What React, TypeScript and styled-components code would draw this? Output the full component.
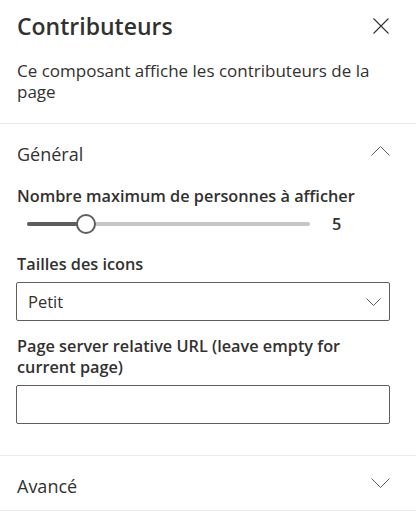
import styled, { createGlobalStyle } from 'styled-components';

const GlobalStyle = createGlobalStyle`
  body {
    margin: 0;
    background: #ffffff;
    font-family: "Open Sans", "Noto Sans", sans-serif;
    color: #323130;
  }
`

const Pane = styled.div`
  width: 416px;
  background: #ffffff;
`

const Header = styled.header`
  display: flex;
  justify-content: space-between;
  align-items: center;
  padding: 10px 27px 0 17px;
  height: 32px;
`

const Title = styled.h1`
  margin: 0;
  font-size: 23px;
  line-height: 32px;
  font-weight: 600;
  color: #323130;
`

const IconButton = styled.button`
  display: flex;
  align-items: center;
  justify-content: center;
  width: 16px;
  height: 16px;
  padding: 0;
  border: none;
  background: transparent;
  cursor: pointer;
`

const Description = styled.p`
  margin: 18px 26px 0 17px;
  padding-bottom: 21px;
  font-size: 17px;
  line-height: 21px;
`

const Group = styled.section`
  border-top: 1px solid #edebe9;
  &:last-child {
    border-bottom: 1px solid #edebe9;
  }
`

const GroupHeader = styled.div`
  display: flex;
  justify-content: space-between;
  align-items: center;
  box-sizing: border-box;
  height: 54px;
  padding: 6px 26px 0 17px;
  font-size: 18px;
  line-height: 24px;
  color: #323130;
  svg {
    margin-bottom: 6px;
  }
`

const GroupBody = styled.div`
  display: flex;
  flex-direction: column;
  gap: 15px;
  padding: 8px 26px 31px 16px;
`

const Field = styled.div`
  display: flex;
  flex-direction: column;
`

const Label = styled.label`
  display: block;
  margin-bottom: 7px;
  padding-left: 1px;
  font-size: 16.3px;
  font-weight: 600;
  line-height: 21px;
`

const SliderRow = styled.div`
  display: flex;
  align-items: center;
  height: 20px;
  margin-bottom: 5px;
  padding-left: 11px;
`

const Track = styled.div`
  position: relative;
  width: 283px;
  height: 4px;
  border-radius: 2px;
  background: #c8c6c4;
`

const TrackFill = styled.div`
  height: 100%;
  border-radius: 2px;
  background: #605e5c;
`

const Thumb = styled.span`
  position: absolute;
  top: 50%;
  width: 16px;
  height: 16px;
  border: 2px solid #605e5c;
  border-radius: 50%;
  background: #ffffff;
  transform: translate(-50%, -50%);
`

const SliderValue = styled.span`
  margin-left: 22px;
  font-size: 16.3px;
  font-weight: 600;
`

const Select = styled.div`
  display: flex;
  justify-content: space-between;
  align-items: center;
  height: 39px;
  box-sizing: border-box;
  border: 1px solid #605e5c;
  border-radius: 2px;
  padding: 0 8px 0 11px;
  font-size: 16.5px;
`

const TextInput = styled.input`
  display: block;
  width: 100%;
  height: 39px;
  box-sizing: border-box;
  border: 1px solid #605e5c;
  border-radius: 2px;
  font: inherit;
  outline: none;
`

const Chevron = ({ up, small }: { up?: boolean; small?: boolean }) => {
  const w = small ? 15 : 19
  const h = small ? 8 : 10
  const d = up
    ? `M0.5 ${h - 0.5} L${w / 2} 0.5 L${w - 0.5} ${h - 0.5}`
    : `M0.5 0.5 L${w / 2} ${h - 0.5} L${w - 0.5} 0.5`
  return (
    <svg width={w} height={h} viewBox={`0 0 ${w} ${h}`}>
      <path d={d} fill="none" stroke="#605e5c" strokeWidth="1" />
    </svg>
  )
}

function App() {
  const value = 5
  const pct = 20.8
  return (
    <Pane>
      <GlobalStyle />
      <Header>
        <Title>Contributeurs</Title>
        <IconButton aria-label="Fermer">
          <svg width="16" height="16" viewBox="0 0 16 16">
            <path d="M0.5 0.5 L15.5 15.5 M15.5 0.5 L0.5 15.5" stroke="#323130" strokeWidth="1.1" />
          </svg>
        </IconButton>
      </Header>
      <Description>Ce composant affiche les contributeurs de la page</Description>

      <Group>
        <GroupHeader>
          Général
          <Chevron up />
        </GroupHeader>
        <GroupBody>
          <Field>
            <Label>Nombre maximum de personnes à afficher</Label>
            <SliderRow>
              <Track>
                <TrackFill style={{ width: `${pct}%` }} />
                <Thumb style={{ left: `${pct}%` }} />
              </Track>
              <SliderValue>{value}</SliderValue>
            </SliderRow>
          </Field>
          <Field>
            <Label>Tailles des icons</Label>
            <Select>
              Petit
              <Chevron small />
            </Select>
          </Field>
          <Field>
            <Label>Page server relative URL (leave empty for current page)</Label>
            <TextInput />
          </Field>
        </GroupBody>
      </Group>

      <Group>
        <GroupHeader>
          Avancé
          <Chevron />
        </GroupHeader>
      </Group>
    </Pane>
  )
}

export default App;
